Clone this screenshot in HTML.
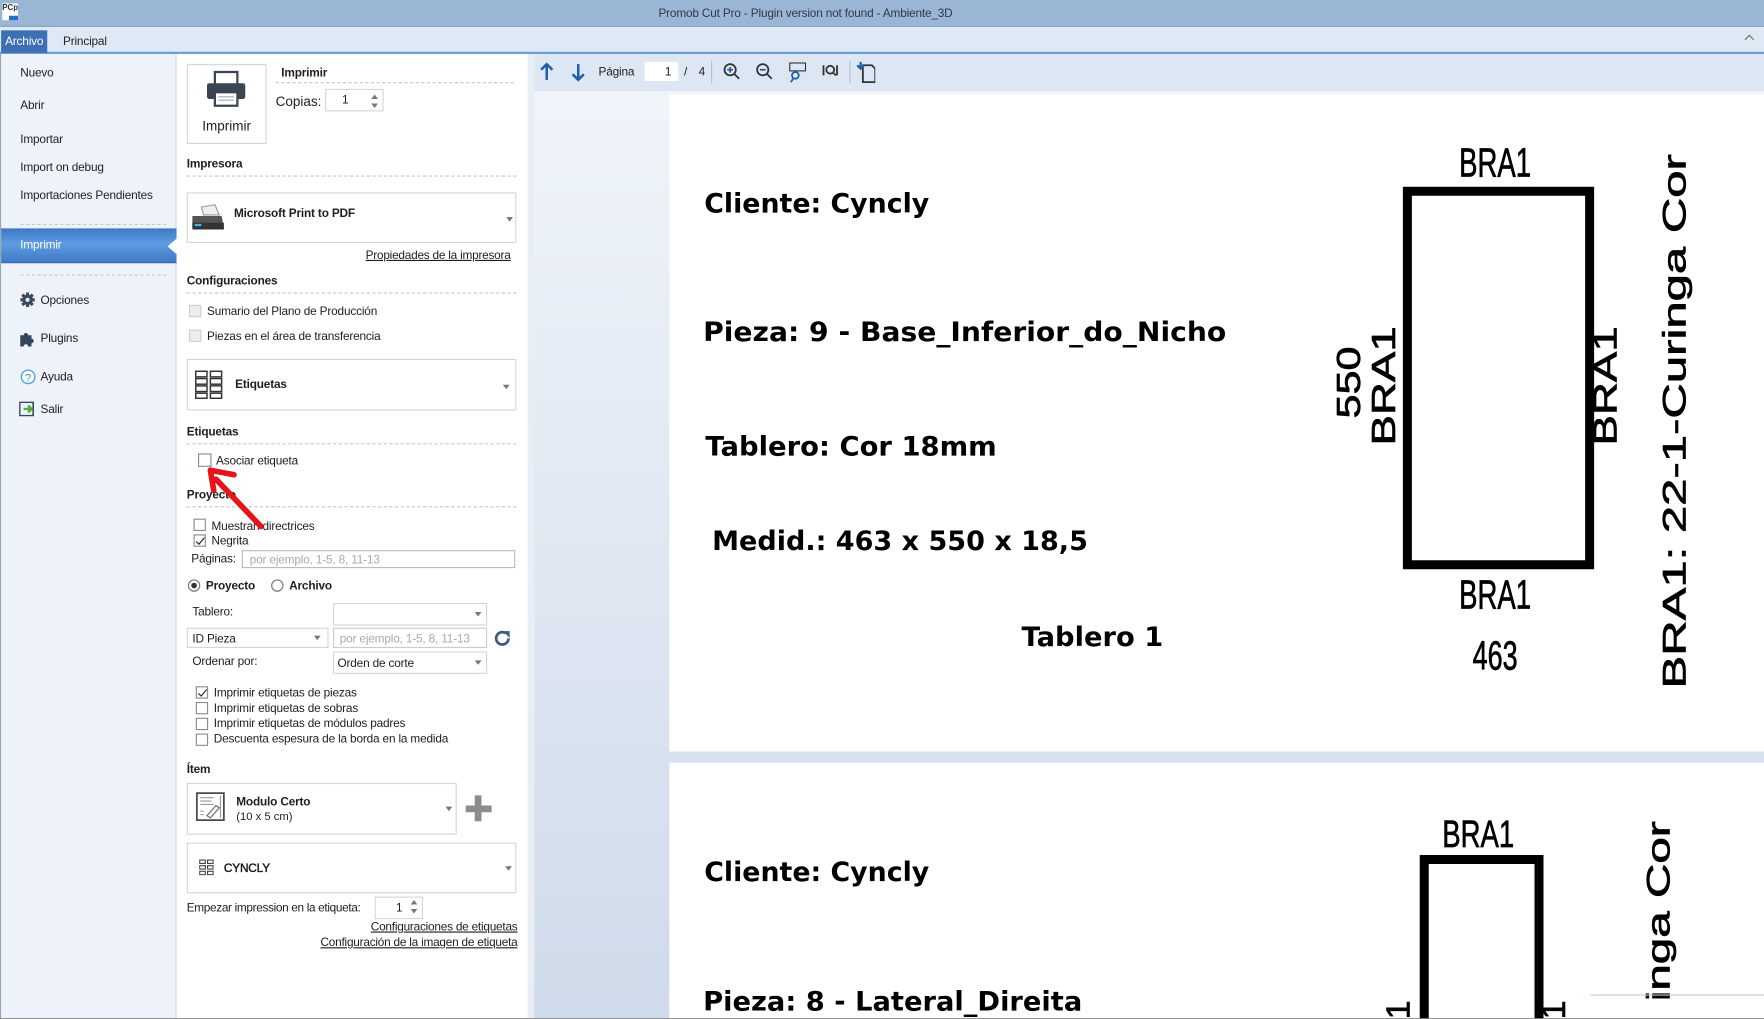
<!DOCTYPE html>
<html><head><meta charset="utf-8"><style>
*{box-sizing:border-box;margin:0;padding:0}
body{width:1764px;height:1019px;overflow:hidden;background:#fff;font-family:"Liberation Sans","DejaVu Sans",sans-serif;color:#1e1e1e}
#w{position:absolute;left:0;top:0;width:1568px;height:906px;transform:scale(1.125);transform-origin:0 0;overflow:hidden;background:#fff}
.a{position:absolute;white-space:nowrap}
.t{font-size:10.5px;letter-spacing:-0.15px}
.b{font-weight:bold}
.dash{position:absolute;height:0;border-top:1px dashed #c8c8c8}
.box{position:absolute;border:1px solid #d5d5d5;background:#fff}
.cb{position:absolute;width:11px;height:11px;border:1px solid #8a8a8a;background:#fff}
.cb.g{border-color:#cfcfcf;background:#ededed}
.chk::after{content:"";position:absolute;left:3px;top:0px;width:3px;height:7px;border:solid #222;border-width:0 1.5px 1.5px 0;transform:rotate(40deg)}
.dd{position:absolute;width:0;height:0;border-left:3px solid transparent;border-right:3px solid transparent;border-top:4px solid #777}
.lnk{text-decoration:underline;font-size:10.5px;letter-spacing:-0.2px}
</style></head><body><div id="w">
<div class="a" style="left:0;top:0;width:1568px;height:24px;background:#9bb5d4;border-bottom:1px solid #8aa6c8"></div>
<div class="a" style="left:2px;top:3px;width:14px;height:15px;background:#fff;font-size:7px;font-weight:bold;color:#333;line-height:10px">PCp<div style="position:absolute;left:6px;bottom:0;width:8px;height:4px;background:#2a6cc0"></div></div>
<div class="a t" style="left:0;width:1432px;top:6px;text-align:center;color:#2d3a4a">Promob Cut Pro - Plugin version not found - Ambiente_3D</div>
<div class="a" style="left:0;top:24px;width:1568px;height:24px;background:#dfe9f5;border-bottom:2px solid #6d9fd6"></div>
<div class="a t" style="left:1px;top:27px;width:41px;height:20px;background:#3c6fb3;color:#fff;line-height:20px;text-align:center">Archivo</div>
<div class="a t" style="left:56px;top:31px;color:#222">Principal</div>
<div class="a" style="left:1552px;top:32px;width:6px;height:6px;border-left:1px solid #666;border-top:1px solid #666;transform:rotate(45deg)"></div>
<div class="a" style="left:0;top:48px;width:157px;height:858px;background:#eef3fb;border-right:1px solid #c5d2e2;border-left:1px solid #9aa"></div>
<div class="a t" style="left:18px;top:59px">Nuevo</div>
<div class="a t" style="left:18px;top:88px">Abrir</div>
<div class="a t" style="left:18px;top:118px">Importar</div>
<div class="a t" style="left:18px;top:143px">Import on debug</div>
<div class="a t" style="left:18px;top:168px">Importaciones Pendientes</div>
<div class="dash" style="left:18px;top:199px;width:130px"></div>
<div class="a" style="left:1px;top:203px;width:156px;height:31px;background:linear-gradient(180deg,#3d78c6 0%,#5f9ce0 45%,#3f7ac8 100%);border-bottom:1px solid #2b5ca0"></div>
<div class="a" style="left:149px;top:212px;width:0;height:0;border-top:7px solid transparent;border-bottom:7px solid transparent;border-right:8px solid #fff"></div>
<div class="a t" style="left:18px;top:212px;color:#fff">Imprimir</div>
<div class="dash" style="left:18px;top:244px;width:130px"></div>
<svg class="a" style="left:18px;top:260px" width="13" height="13" viewBox="0 0 14 14"><circle cx="7" cy="7" r="5" fill="#3b4a5e"/><g stroke="#3b4a5e" stroke-width="3"><line x1="7" y1="0" x2="7" y2="14"/><line x1="0" y1="7" x2="14" y2="7"/><line x1="2" y1="2" x2="12" y2="12"/><line x1="12" y1="2" x2="2" y2="12"/></g><circle cx="7" cy="7" r="2" fill="#eef3fb"/></svg>
<div class="a t" style="left:36px;top:261px">Opciones</div>
<svg class="a" style="left:17px;top:294px" width="14" height="14" viewBox="0 0 14 14"><path d="M1 4h3a2 2 0 1 1 4 0h3v3a2 2 0 1 1 0 4v3H8a2 2 0 1 0-4 0H1z" fill="#34475f"/></svg>
<div class="a t" style="left:36px;top:295px">Plugins</div>
<svg class="a" style="left:18px;top:328px" width="14" height="14"><circle cx="7" cy="7" r="6" fill="#fff" stroke="#4aa3df" stroke-width="1.2"/><text x="7" y="11" font-size="10" text-anchor="middle" fill="#3b8fd0" font-family="Liberation Sans">?</text></svg>
<div class="a t" style="left:36px;top:329px">Ayuda</div>
<svg class="a" style="left:17px;top:357px" width="15" height="13"><rect x="0.5" y="0.5" width="12" height="12" fill="none" stroke="#34475f" stroke-width="1.4"/><path d="M4 6.5h6M8 3.5l3 3-3 3" stroke="#4caf3c" stroke-width="2.2" fill="none"/></svg>
<div class="a t" style="left:36px;top:358px">Salir</div>
<div class="a" style="left:157px;top:48px;width:313px;height:858px;background:#fff"></div>
<div class="a" style="left:469px;top:48px;width:6px;height:858px;background:#e9eef5"></div>
<div class="box" style="left:166px;top:57px;width:71px;height:71px"></div>
<svg class="a" style="left:182px;top:62px" width="38" height="34" viewBox="0 0 38 34"><rect x="9" y="2" width="20" height="12" fill="#fff" stroke="#3a4553" stroke-width="2"/><rect x="2" y="12" width="34" height="14" rx="2" fill="#3a4553"/><rect x="9" y="20" width="20" height="12" fill="#fff" stroke="#3a4553" stroke-width="2"/><line x1="12" y1="24" x2="26" y2="24" stroke="#aaa"/><line x1="12" y1="27" x2="26" y2="27" stroke="#aaa"/></svg>
<div class="a" style="left:166px;top:105px;width:71px;text-align:center;font-size:12px">Imprimir</div>
<div class="a t b" style="left:250px;top:59px">Imprimir</div>
<div class="dash" style="left:245px;top:73px;width:212px"></div>
<div class="a" style="left:245px;top:83px;font-size:12px">Copias:</div>
<div class="box" style="left:289px;top:79px;width:52px;height:20px"></div>
<div class="a t" style="left:304px;top:83px">1</div>
<div class="dd" style="left:330px;top:84px;transform:rotate(180deg)"></div><div class="dd" style="left:330px;top:92px"></div>
<div class="a t b" style="left:166px;top:140px">Impresora</div>
<div class="dash" style="left:166px;top:156px;width:293px"></div>
<div class="box" style="left:166px;top:171px;width:293px;height:45px"></div>
<svg class="a" style="left:169px;top:180px" width="32" height="28" viewBox="0 0 32 28"><path d="M10 4l12-2 4 9H12z" fill="#eee" stroke="#999"/><path d="M2 12h26l2 10H2z" fill="#555"/><path d="M2 18h28v6H2z" fill="#333"/><rect x="4" y="19" width="6" height="2" fill="#4ab3e8"/></svg>
<div class="a t b" style="left:208px;top:184px">Microsoft Print to PDF</div>
<div class="dd" style="left:450px;top:193px"></div>
<div class="a lnk" style="left:325px;top:221px">Propiedades de la impresora</div>
<div class="a t b" style="left:166px;top:244px">Configuraciones</div>
<div class="dash" style="left:166px;top:260px;width:293px"></div>
<div class="cb g" style="left:168px;top:271px"></div><div class="a t" style="left:184px;top:271px">Sumario del Plano de Producción</div>
<div class="cb g" style="left:168px;top:293px"></div><div class="a t" style="left:184px;top:293px">Piezas en el área de transferencia</div>
<div class="box" style="left:166px;top:319px;width:293px;height:46px"></div>
<svg class="a" style="left:173px;top:329px" width="27" height="26"><g fill="none" stroke="#333" stroke-width="1.3"><rect x="1" y="1" width="10" height="5"/><rect x="14" y="1" width="10" height="5"/><rect x="1" y="7.5" width="10" height="5"/><rect x="14" y="7.5" width="10" height="5"/><rect x="1" y="14" width="10" height="5"/><rect x="14" y="14" width="10" height="5"/><rect x="1" y="20.5" width="10" height="4.5"/><rect x="14" y="20.5" width="10" height="4.5"/></g></svg>
<div class="a t b" style="left:209px;top:336px">Etiquetas</div>
<div class="dd" style="left:447px;top:342px"></div>
<div class="a t b" style="left:166px;top:378px">Etiquetas</div>
<div class="dash" style="left:166px;top:394px;width:293px"></div>
<div class="cb" style="left:176px;top:403px;width:12px;height:12px"></div><div class="a t" style="left:192px;top:404px">Asociar etiqueta</div>
<div class="a t b" style="left:166px;top:434px">Proyecto</div>
<div class="dash" style="left:166px;top:450px;width:293px"></div>
<div class="cb" style="left:172px;top:461px"></div><div class="a t" style="left:188px;top:462px">Muestran directrices</div>
<div class="cb chk" style="left:172px;top:475px"></div><div class="a t" style="left:188px;top:475px">Negrita</div>
<div class="a t" style="left:170px;top:491px">Páginas:</div>
<div class="box" style="left:215px;top:489px;width:243px;height:16px;border-color:#bbb"></div>
<div class="a t" style="left:222px;top:492px;color:#aaa">por ejemplo, 1-5, 8, 11-13</div>
<div class="a" style="left:167px;top:515px;width:11px;height:11px;border:1px solid #777;border-radius:50%;background:#fff"><div style="position:absolute;left:2px;top:2px;width:5px;height:5px;border-radius:50%;background:#333"></div></div>
<div class="a t b" style="left:183px;top:515px">Proyecto</div>
<div class="a" style="left:241px;top:515px;width:11px;height:11px;border:1px solid #777;border-radius:50%;background:#fff"></div>
<div class="a t b" style="left:257px;top:515px">Archivo</div>
<div class="a t" style="left:171px;top:538px">Tablero:</div>
<div class="box" style="left:296px;top:536px;width:137px;height:20px"></div><div class="dd" style="left:422px;top:544px"></div>
<div class="box" style="left:166px;top:558px;width:126px;height:18px"></div>
<div class="a t" style="left:171px;top:562px">ID Pieza</div><div class="dd" style="left:279px;top:565px"></div>
<div class="box" style="left:296px;top:558px;width:137px;height:18px;border-color:#ccc"></div>
<div class="a t" style="left:302px;top:562px;color:#aaa">por ejemplo, 1-5, 8, 11-13</div>
<svg class="a" style="left:438px;top:559px" width="17" height="17" viewBox="0 0 17 17"><path d="M14 8.5A5.5 5.5 0 1 1 11.5 3.8" fill="none" stroke="#3a5a80" stroke-width="2.4"/><path d="M9 2h6v6z" fill="#3a5a80"/></svg>
<div class="a t" style="left:171px;top:582px">Ordenar por:</div>
<div class="box" style="left:296px;top:579px;width:137px;height:20px"></div>
<div class="a t" style="left:300px;top:584px">Orden de corte</div><div class="dd" style="left:422px;top:587px"></div>
<div class="cb chk" style="left:174px;top:610px"></div><div class="a t" style="left:190px;top:610px">Imprimir etiquetas de piezas</div>
<div class="cb" style="left:174px;top:624px"></div><div class="a t" style="left:190px;top:624px">Imprimir etiquetas de sobras</div>
<div class="cb" style="left:174px;top:638px"></div><div class="a t" style="left:190px;top:637px">Imprimir etiquetas de módulos padres</div>
<div class="cb" style="left:174px;top:652px"></div><div class="a t" style="left:190px;top:651px">Descuenta espesura de la borda en la medida</div>
<div class="a t b" style="left:166px;top:678px">Ítem</div>
<div class="box" style="left:166px;top:696px;width:240px;height:46px"></div>
<svg class="a" style="left:174px;top:704px" width="26" height="26"><rect x="1" y="1" width="24" height="24" fill="#fff" stroke="#444" stroke-width="1.5"/><g stroke="#999"><line x1="4" y1="5" x2="16" y2="5"/><line x1="4" y1="8" x2="14" y2="8"/><line x1="4" y1="11" x2="16" y2="11"/><line x1="4" y1="17" x2="7" y2="17"/><line x1="4" y1="20" x2="7" y2="20"/></g><path d="M10 21l8-9 3 2-8 9z" fill="none" stroke="#666"/><line x1="22" y1="3" x2="22" y2="23" stroke="#999"/></svg>
<div class="a t b" style="left:210px;top:707px">Modulo Certo</div>
<div class="a" style="left:210px;top:721px;font-size:10px">(10 x 5 cm)</div>
<div class="dd" style="left:396px;top:717px"></div>
<div class="a" style="left:414px;top:716px;width:23px;height:6px;background:#8c8c8c"></div>
<div class="a" style="left:422px;top:707px;width:6px;height:23px;background:#8c8c8c"></div>
<div class="box" style="left:166px;top:749px;width:293px;height:45px"></div>
<svg class="a" style="left:177px;top:764px" width="13" height="14"><g fill="none" stroke="#444"><rect x="0.5" y="0.5" width="5" height="3"/><rect x="7.5" y="0.5" width="5" height="3"/><rect x="0.5" y="5.5" width="5" height="3"/><rect x="7.5" y="5.5" width="5" height="3"/><rect x="0.5" y="10.5" width="5" height="3"/><rect x="7.5" y="10.5" width="5" height="3"/></g></svg>
<div class="a t" style="left:199px;top:766px;-webkit-text-stroke:0.3px #000">CYNCLY</div>
<div class="dd" style="left:449px;top:770px"></div>
<div class="a t" style="left:166px;top:801px;letter-spacing:-0.3px">Empezar impression en la etiqueta:</div>
<div class="box" style="left:333px;top:797px;width:43px;height:20px"></div>
<div class="a t" style="left:352px;top:801px">1</div>
<div class="dd" style="left:365px;top:800px;transform:rotate(180deg)"></div><div class="dd" style="left:365px;top:808px"></div>
<div class="a lnk" style="left:323px;top:818px;width:137px;text-align:right">Configuraciones de etiquetas</div>
<div class="a lnk" style="left:260px;top:832px;width:200px;text-align:right">Configuración de la imagen de etiqueta</div>
<div class="a" style="left:475px;top:48px;width:1093px;height:858px;background:linear-gradient(180deg,#f1f5fb 0%,#cfdaea 100%)"></div>
<div class="a" style="left:475px;top:48px;width:1093px;height:33px;background:#dde7f3"></div>
<svg class="a" style="left:478px;top:54px" width="300" height="20">
<g stroke="#1d5fa8" stroke-width="2.2" fill="none"><path d="M8 17V3M3 8l5-5 5 5"/><path d="M36 3v14M31 12l5 5 5-5"/></g>
<g fill="none" stroke="#333" stroke-width="1.6"><circle cx="171" cy="8" r="5"/><path d="M175 12l4 4"/><path d="M168.5 8h5M171 5.5v5" stroke="#1d5fa8"/><circle cx="200" cy="8" r="5"/><path d="M204 12l4 4"/><path d="M197.5 8h5" stroke="#1d5fa8"/><rect x="224" y="2" width="14" height="7" stroke-width="1"/><circle cx="229" cy="13" r="3" stroke="#1d5fa8"/><path d="M227 16l-2 3" stroke="#1d5fa8"/><path d="M254 4v9M266 4v9"/><circle cx="260" cy="8" r="3.5"/><path d="M263 11l2 2"/><path d="M289 4h8l3 3v12h-11z"/></g>
<path d="M287 1v5M284 4l3 3 3-3" stroke="#1d5fa8" stroke-width="2" fill="none"/>
</svg>
<div class="a t" style="left:532px;top:58px">Página</div>
<div class="a" style="left:573px;top:55px;width:30px;height:17px;background:#fff"></div>
<div class="a t" style="left:591px;top:58px">1</div>
<div class="a t" style="left:608px;top:58px">/</div>
<div class="a t" style="left:621px;top:58px">4</div>
<div class="a" style="left:632px;top:54px;width:1px;height:20px;background:#b5c2d2"></div>
<div class="a" style="left:755px;top:54px;width:1px;height:20px;background:#b5c2d2"></div>
<div class="a" style="left:595px;top:84px;width:973px;height:584px;background:#fff"></div>
<div class="a" style="left:595px;top:678px;width:973px;height:228px;background:#fff"></div>
<svg class="a" style="left:0;top:0" width="1568" height="906" font-family="DejaVu Sans, sans-serif" font-weight="bold" fill="#000">
<text x="626" y="189" font-size="24" textLength="200" lengthAdjust="spacingAndGlyphs">Cliente: Cyncly</text>
<text x="625" y="303" font-size="24" textLength="465" lengthAdjust="spacingAndGlyphs">Pieza: 9 - Base_Inferior_do_Nicho</text>
<text x="627" y="405" font-size="24" textLength="259" lengthAdjust="spacingAndGlyphs">Tablero: Cor 18mm</text>
<text x="633" y="489" font-size="24" textLength="334" lengthAdjust="spacingAndGlyphs">Medid.: 463 x 550 x 18,5</text>
<text x="908" y="574" font-size="24" textLength="126" lengthAdjust="spacingAndGlyphs">Tablero 1</text>
<text x="626" y="783" font-size="24" textLength="200" lengthAdjust="spacingAndGlyphs">Cliente: Cyncly</text>
<text x="625" y="898" font-size="24" textLength="337" lengthAdjust="spacingAndGlyphs">Pieza: 8 - Lateral_Direita</text>
<g font-family="Liberation Sans, sans-serif" font-weight="normal" stroke="#000" stroke-width="0.6">
<rect x="1251" y="170" width="162" height="332" fill="none" stroke-width="8"/>
<text x="1297" y="157" font-size="36" textLength="64" lengthAdjust="spacingAndGlyphs">BRA1</text>
<text x="1297" y="541" font-size="36" textLength="64" lengthAdjust="spacingAndGlyphs">BRA1</text>
<text x="1309" y="595" font-size="36" textLength="40" lengthAdjust="spacingAndGlyphs">463</text>
<text transform="translate(1240,396) rotate(-90)" font-size="30" textLength="106" lengthAdjust="spacingAndGlyphs">BRA1</text>
<text transform="translate(1209,372) rotate(-90)" font-size="30" textLength="64" lengthAdjust="spacingAndGlyphs">550</text>
<text transform="translate(1437,396) rotate(-90)" font-size="30" textLength="106" lengthAdjust="spacingAndGlyphs">BRA1</text>
<text transform="translate(1498,612) rotate(-90)" font-size="29" textLength="475" lengthAdjust="spacingAndGlyphs">BRA1: 22-1-Curinga Cor</text>
<rect x="1266" y="764" width="102" height="160" fill="none" stroke-width="8"/>
<text x="1282" y="753" font-size="34" textLength="64" lengthAdjust="spacingAndGlyphs">BRA1</text>
<text transform="translate(1484,890) rotate(-90)" font-size="29" textLength="160" lengthAdjust="spacingAndGlyphs">inga Cor</text>
<text transform="translate(1253,906) rotate(-90)" font-size="30">1</text>
<text transform="translate(1391,906) rotate(-90)" font-size="30">1</text>
</g>
</svg>
<div class="a" style="left:1414px;top:884px;width:154px;height:1px;background:#bcd"></div>
<svg class="a" style="left:180px;top:410px" width="60" height="65"><path d="M52 58L12 16" stroke="#e8131b" stroke-width="5" stroke-linecap="round" fill="none"/><path d="M7 8L10 26M7 8L28 12" stroke="#e8131b" stroke-width="5" stroke-linecap="round" fill="none"/></svg>
<div class="a" style="left:0;top:905px;width:1568px;height:1px;background:#888"></div>
</div></body></html>
